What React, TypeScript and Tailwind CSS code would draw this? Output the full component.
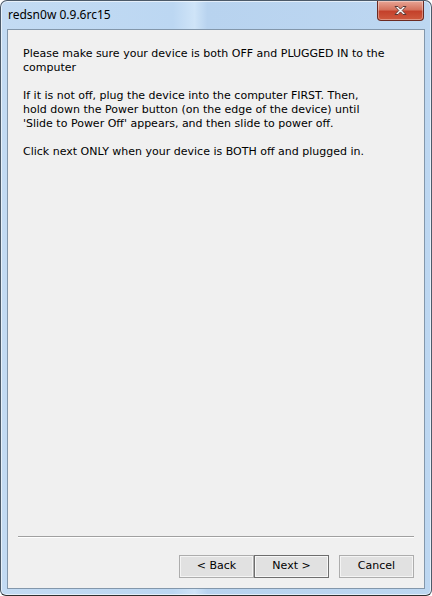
import { type ReactNode } from 'react'

const bodyFont = { fontFamily: '"DejaVu Sans", Verdana, sans-serif' }

function CloseButton() {
    return (
        <div className="absolute right-[7px] top-0 flex h-[20px] w-[47px] items-center justify-center rounded-b-[4px] border border-t-0 border-[#6b2a22] bg-[linear-gradient(to_bottom,#e8a595_0%,#d5735e_45%,#c4412b_55%,#cf5a3e_100%)] shadow-[inset_0_0_0_1px_rgba(255,255,255,0.35)]">
            <svg width="15" height="11" viewBox="0 0 15 11">
                <path
                    d="M2 1.5h3l2.5 2.6L10 1.5h3L9.2 5.5l3.8 4h-3L7.5 6.9 5 9.5H2l3.8-4z"
                    fill="#ffffff"
                    stroke="#5a3a36"
                    strokeWidth="1"
                    strokeLinejoin="round"
                />
            </svg>
        </div>
    )
}

function WinButton({ children, isDefault }: { children: ReactNode; isDefault?: boolean }) {
    return (
        <button
            className={
                'flex h-[23px] w-[75px] items-center justify-center text-[11px] text-black ' +
                (isDefault
                    ? 'border border-[#6e6e6e] bg-[#e1e1e1] shadow-[inset_0_0_0_1px_#f7f7f7]'
                    : 'border border-[#adadad] bg-[#e1e1e1] shadow-[inset_0_0_0_1px_#f4f4f4]')
            }
            style={bodyFont}
        >
            {children}
        </button>
    )
}

export default function App() {
    return (
        <div className="h-[596px] w-[432px] bg-white">
            <div className="relative flex h-[596px] w-[432px] flex-col overflow-hidden rounded-t-[7px] rounded-b-[6px] border border-[#4c5a69] border-b-[#2f2f2f] bg-[linear-gradient(to_right,#c3dbf3_0%,#bcd7f2_40%,#cfe4f8_45%,#b8d3ef_48%,#bdd7f1_100%)] shadow-[inset_0_0_0_1px_rgba(255,255,255,0.6)]">
                <div className="flex h-[28px] shrink-0 items-center pl-[7px]">
                    <span
                        className="text-[12px] text-black"
                        style={{ fontFamily: '"Noto Sans", "Open Sans", sans-serif' }}
                    >
                        redsn0w 0.9.6rc15
                    </span>
                </div>
                <CloseButton />

                <div className="mx-[6px] mb-[6px] flex flex-1 flex-col border border-[#8397ab] bg-[#f0f0f0]">
                    <div
                        className="whitespace-nowrap pl-[15px] pt-[17px] text-[11px] leading-[14px] text-black"
                        style={bodyFont}
                    >
                        <p>Please make sure your device is both OFF and PLUGGED IN to the</p>
                        <p>computer</p>
                        <p className="mt-[14px]">If it is not off, plug the device into the computer FIRST. Then,</p>
                        <p>hold down the Power button (on the edge of the device) until</p>
                        <p>'Slide to Power Off' appears, and then slide to power off.</p>
                        <p className="mt-[14px]">Click next ONLY when your device is BOTH off and plugged in.</p>
                    </div>

                    <div className="flex-1" />

                    <div className="mx-[10px] border-t border-b border-t-[#a0a0a0] border-b-white" />

                    <div className="mb-[10px] mr-[10px] mt-[17px] flex justify-end">
                        <WinButton>&lt; Back</WinButton>
                        <WinButton isDefault>Next &gt;</WinButton>
                        <div className="w-[10px]" />
                        <WinButton>Cancel</WinButton>
                    </div>
                </div>
            </div>
        </div>
    )
}
